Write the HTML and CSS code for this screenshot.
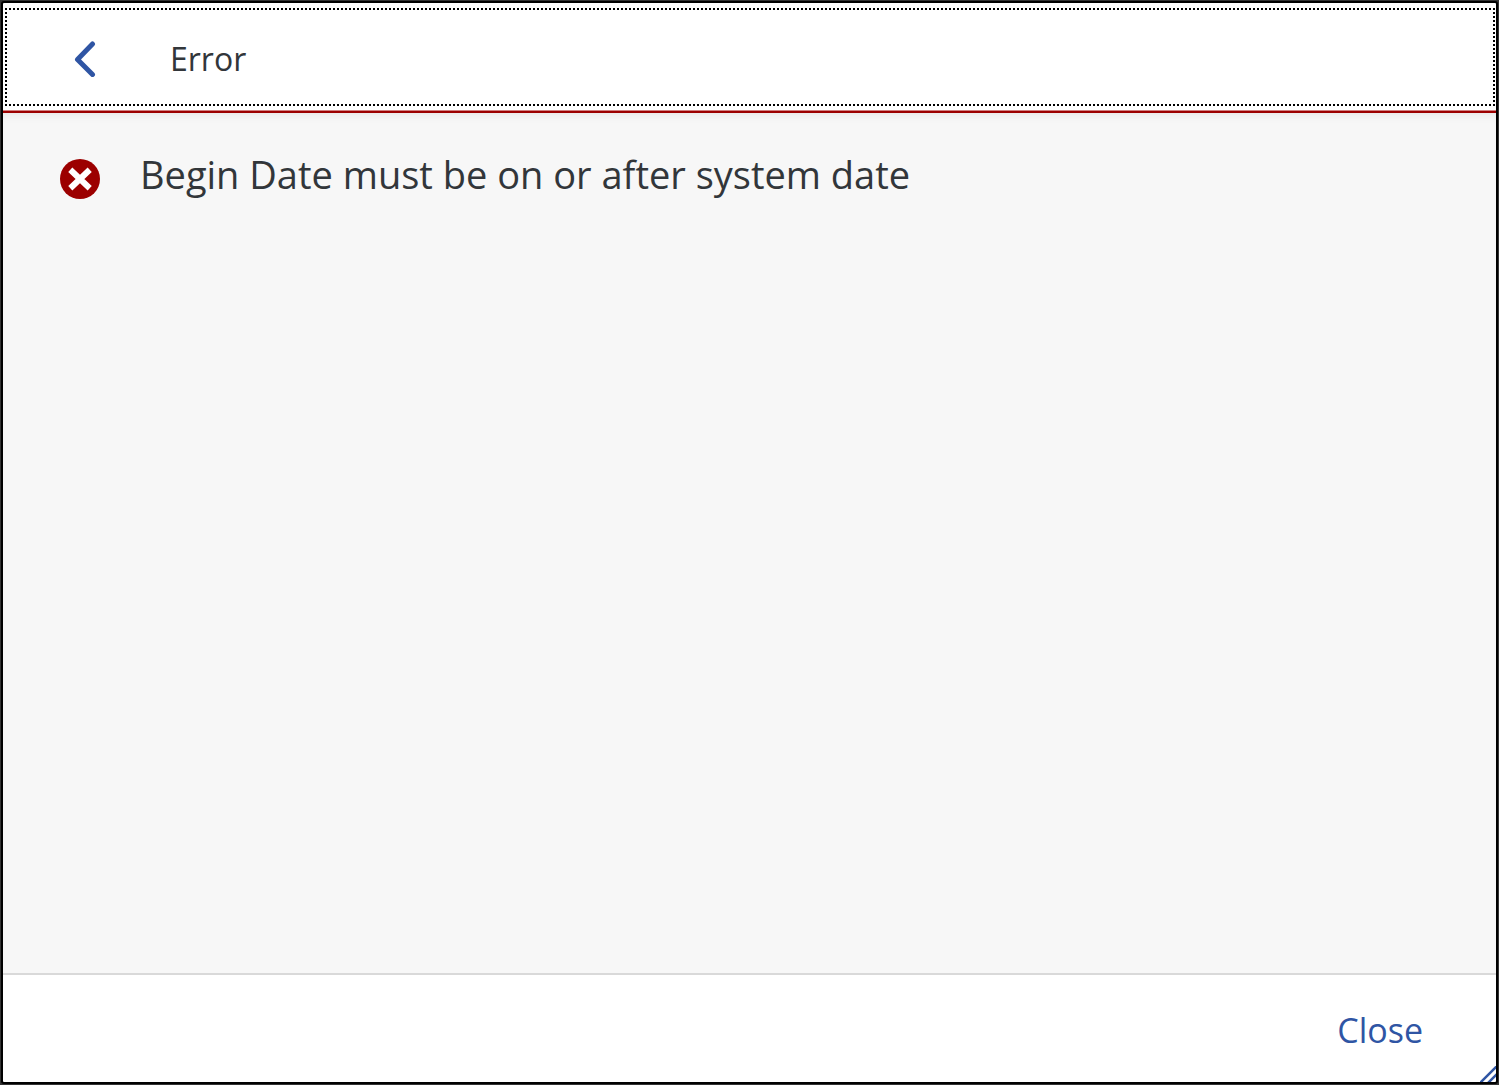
FILE: index.html
```html
<!DOCTYPE html>
<html lang="en">
<head>
<meta charset="utf-8">
<meta name="viewport" content="width=device-width, initial-scale=1">
<title>Error</title>
<link rel="stylesheet" href="styles.css">
</head>
<body>
<div class="dialog" role="alertdialog" aria-labelledby="title" aria-describedby="message">
  <header class="header">
    <div class="bar">
      <button class="back" type="button" aria-label="Back">
        <svg width="22" height="36" viewBox="0 0 22 36" aria-hidden="true"><path d="M18.500 3 3.500 18.500l15 15" fill="none" stroke="currentColor" stroke-width="5" stroke-linecap="round" stroke-linejoin="round"/></svg>
      </button>
      <h1 class="title" id="title">Error</h1>
    </div>
  </header>
  <main class="content">
    <svg class="status" viewBox="0 0 40 40" aria-hidden="true"><circle cx="20" cy="20" r="20" fill="#9c0000"/><path d="m10.300 10.800 19.400 18.400M29.700 10.800 10.300 29.200" stroke="#fff" stroke-width="6"/></svg>
    <p class="message" id="message">Begin Date must be on or after system date</p>
  </main>
  <footer class="footer">
    <button class="close" type="button">Close</button>
    <svg class="grip" viewBox="0 0 16 16" aria-hidden="true"><path d="M0 17 17 0M8 17l9-9" stroke="#2f55a4" stroke-width="2.500"/></svg>
  </footer>
</div>
</body>
</html>
```
FILE: styles.css
```css
* {
  box-sizing: border-box;
}

body {
  margin: 0;
  background: #333;
  color: #32363a;
  font-family: "Open Sans", "Noto Sans", sans-serif;
}

.dialog {
  display: flex;
  flex-direction: column;
  min-height: calc(100vh - 2px);
  margin: 1px;
  border: 2px solid #000;
  border-radius: 3px;
  background: #fff;
}

.header {
  padding: 5px 1px 5px 2px;
  border-bottom: 2px solid #9c0000;
  box-shadow: inset 0 -1px #d08080;
}

.bar {
  display: flex;
  align-items: center;
  height: 98px;
  padding: 3px 0 0 48px;
  border: 2px dotted #000;
}

.back,
.close {
  border: 0;
  background: none;
  color: #2f55a4;
  font: inherit;
  cursor: pointer;
}

.back {
  display: flex;
  align-items: center;
  justify-content: center;
  width: 60px;
  height: 72px;
  padding: 0;
}

.back svg {
  display: block;
}

.title {
  margin: 0 0 0 55px;
  font-size: 32px;
  line-height: 48px;
  font-weight: 400;
}

.content {
  display: flex;
  flex: 1;
  align-items: flex-start;
  gap: 40px;
  padding: 33px 57px;
  background: #f7f7f7;
  box-shadow: inset 0 8px 8px -6px #e6e6e6;
}

.status {
  flex: none;
  width: 40px;
  height: 40px;
  margin-top: 13px;
}

.message {
  margin: 0;
  font-size: 38px;
  line-height: 56px;
}

.footer {
  position: relative;
  display: flex;
  align-items: center;
  justify-content: flex-end;
  height: 109px;
  padding: 2px 53px 0;
  border-top: 2px solid #d9d9d9;
}

.close {
  padding: 8px 20px;
  font-size: 34px;
  line-height: 48px;
}

.grip {
  position: absolute;
  right: 0;
  bottom: 0;
  width: 16px;
  height: 16px;
}
```
